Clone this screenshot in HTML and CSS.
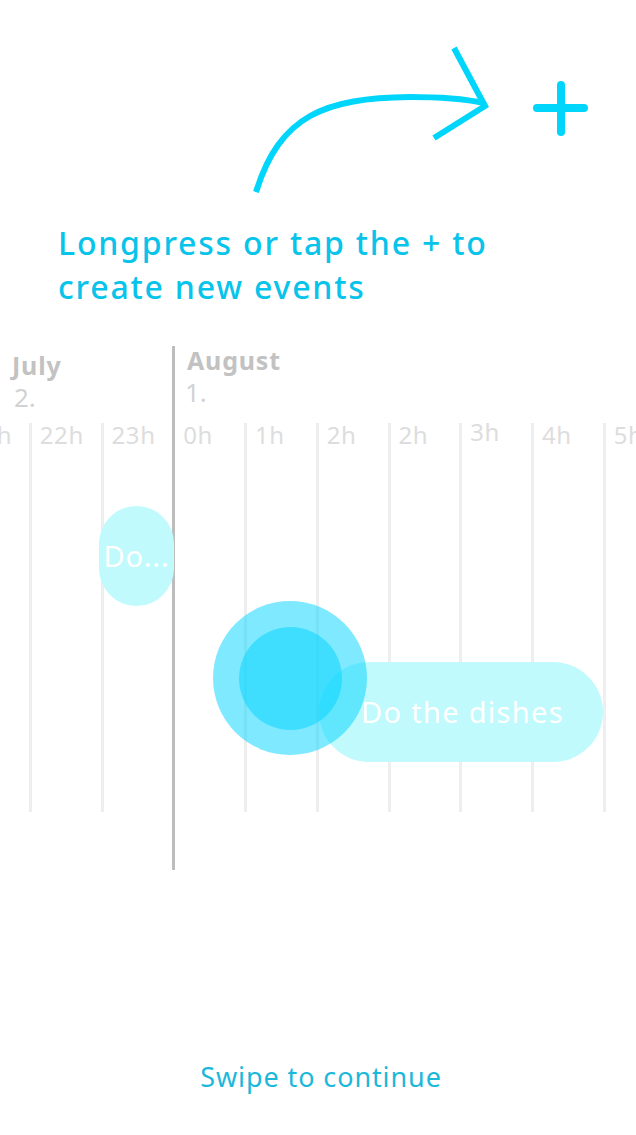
FILE: index.html
```html
<!DOCTYPE html>
<html>
<head>
<meta charset="utf-8">
<link rel="stylesheet" href="styles.css">
</head>
<body>
<div class="screen">
  <svg class="pointer" width="636" height="210" viewBox="0 0 636 210">
    <path d="M256 192 C 280 115, 325 98, 410 97 C 440 97, 465 99, 484 103" fill="none" stroke="#00d6fb" stroke-width="6"/>
    <path d="M454 48 L 485 106 L 434 138" fill="none" stroke="#00d6fb" stroke-width="6"/>
    <path d="M537 108 H 584 M 561 85 V 132" fill="none" stroke="#00d6fb" stroke-width="8" stroke-linecap="round"/>
  </svg>
  <p class="hint">Longpress or tap the + to<br>create new events</p>

  <div class="timeline">
    <div class="months">
      <div class="month july"><span class="mname">July</span><span class="mday">2.</span></div>
      <div class="month august"><span class="mname">August</span><span class="mday">1.</span></div>
    </div>
    <div class="hours">
      <div class="col first"><span>21h</span></div>
      <div class="col"><span>22h</span></div>
      <div class="col"><span>23h</span></div>
      <div class="col"><span>0h</span></div>
      <div class="col"><span>1h</span></div>
      <div class="col"><span>2h</span></div>
      <div class="col"><span>2h</span></div>
      <div class="col"><span class="raised">3h</span></div>
      <div class="col"><span>4h</span></div>
      <div class="col"><span>5h</span></div>
    </div>
    <div class="divider"></div>
    <div class="event small">Do...</div>
    <div class="event dishes">Do the dishes</div>
    <div class="touch"><div class="touch-core"></div></div>
  </div>

  <p class="swipe">Swipe to continue</p>
</div>
</body>
</html>
```

FILE: styles.css
```css
html, body {
  margin: 0;
  padding: 0;
  background: #ffffff;
}
.screen {
  width: 636px;
  height: 1135px;
  overflow: hidden;
  font-family: "Noto Sans", "DejaVu Sans", sans-serif;
}
.pointer {
  display: block;
}
.hint {
  margin: 11px 0 0 58px;
  font-size: 32px;
  line-height: 44px;
  font-weight: 500;
  color: #08c3ea;
  letter-spacing: 1.8px;
}
.timeline {
  position: relative;
  height: 540px;
  margin-top: 30px;
}
.months {
  display: flex;
  height: 84px;
}
.month {
  display: flex;
  flex-direction: column;
}
.july {
  margin-left: 12px;
  width: 175px;
  padding-top: 11px;
}
.august {
  padding-top: 6px;
}
.mname {
  font-size: 25px;
  font-weight: 700;
  color: #c2c2c2;
  line-height: 30px;
  letter-spacing: 0.8px;
}
.mday {
  font-size: 26px;
  color: #d2d2d2;
  line-height: 34px;
  padding-left: 2px;
}
.august .mday {
  padding-left: 0;
  margin-left: -2px;
}
.hours {
  display: flex;
  margin-left: -43px;
  height: 389px;
}
.col {
  flex: 0 0 71.75px;
  box-sizing: border-box;
  border-left: 3px solid #eeeeee;
  padding-left: 8px;
  height: 389px;
}
.col span {
  display: block;
  font-size: 24px;
  color: #dddddd;
  line-height: 26px;
  letter-spacing: 0.6px;
  margin-top: -1px;
}
.col span.raised {
  margin-top: -4px;
}
.divider {
  position: absolute;
  left: 172px;
  top: 7px;
  width: 3px;
  height: 524px;
  background: #bdbdbd;
}
.event {
  position: absolute;
  background: #c0fafd;
  color: #ffffff;
  font-size: 29px;
  display: flex;
  align-items: center;
  box-sizing: border-box;
  white-space: nowrap;
}
.small {
  left: 99px;
  top: 167px;
  width: 75px;
  height: 100px;
  border-radius: 38px;
  justify-content: center;
  padding-bottom: 2px;
  letter-spacing: 0.8px;
}
.dishes {
  left: 319px;
  top: 323px;
  width: 284px;
  height: 100px;
  border-radius: 50px;
  padding-left: 42px;
  letter-spacing: 1.3px;
  padding-bottom: 2px;
}
.touch {
  position: absolute;
  left: 213px;
  top: 262px;
  width: 154px;
  height: 154px;
  border-radius: 50%;
  background: rgba(0, 212, 255, 0.5);
  display: flex;
  align-items: center;
  justify-content: center;
}
.touch-core {
  width: 103px;
  height: 103px;
  border-radius: 50%;
  background: rgba(0, 212, 255, 0.5);
}
.swipe {
  margin: 180px 0 0 0;
  padding-left: 6px;
  text-align: center;
  font-size: 27px;
  font-weight: 400;
  color: #1cb8da;
  line-height: 36px;
  letter-spacing: 0.9px;
}
```
